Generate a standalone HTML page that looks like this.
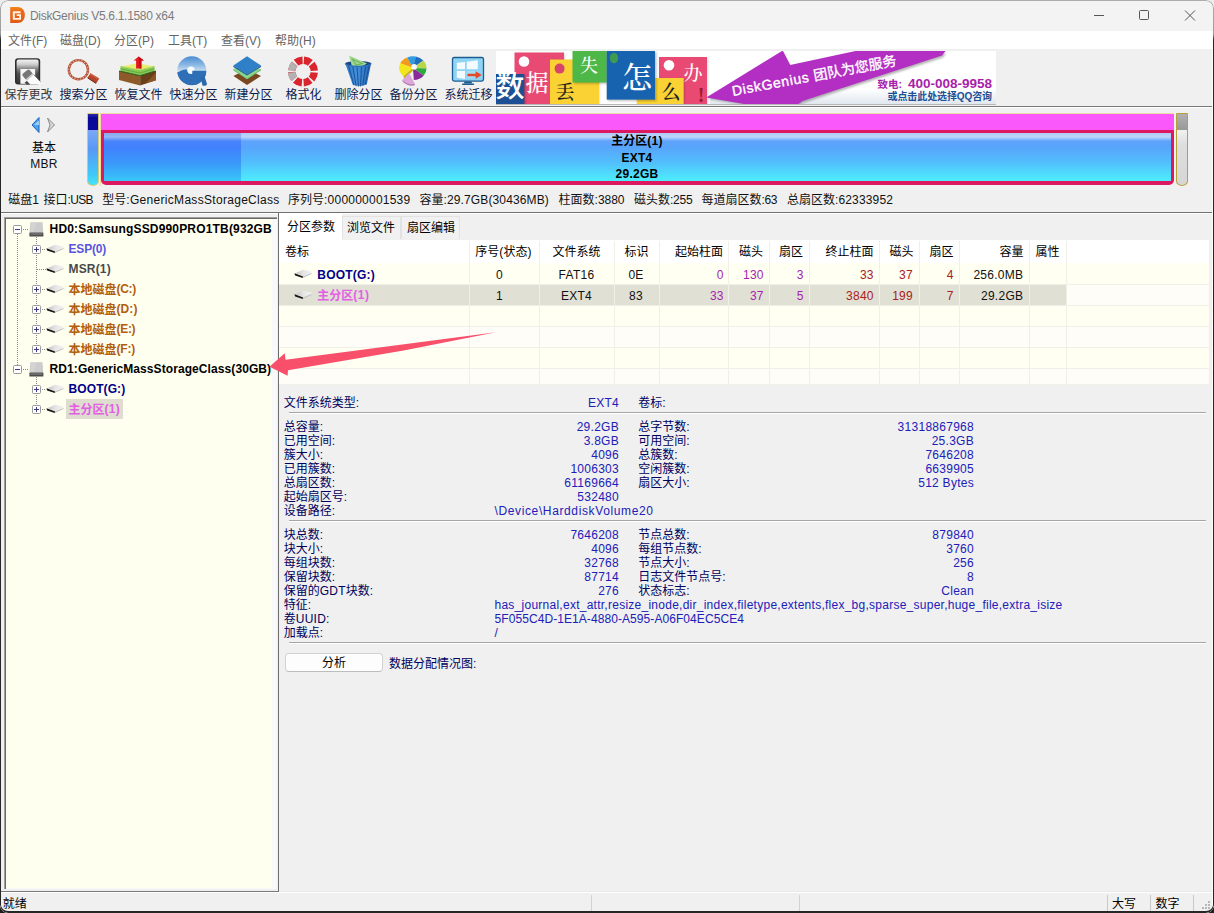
<!DOCTYPE html>
<html lang="zh-CN">
<head>
<meta charset="utf-8">
<title>DiskGenius V5.6.1.1580 x64</title>
<style>
*{box-sizing:border-box;margin:0;padding:0}
html,body{width:1214px;height:913px;overflow:hidden;background:#1c1c1c}
body{background:linear-gradient(#ececec 0,#ececec 30px,#1c1c1c 44px)}
body{font-family:"Liberation Sans","Noto Sans CJK SC",sans-serif;font-size:12px;color:#000;position:relative}
#win{position:absolute;left:0;top:0;width:1214px;height:913px;background:#f0f0f0;border-radius:8px;overflow:hidden}
.abs{position:absolute}
.t{position:absolute;white-space:nowrap;line-height:14px;height:14px}
.b{font-weight:bold}
#title{position:absolute;left:0;top:0;width:1214px;height:31px;background:#f3f3f3}
#title .cap{left:30px;top:9px;color:#7c7c7c;font-size:12px;letter-spacing:-.31px}
#menu{position:absolute;left:0;top:31px;width:1214px;height:18px;background:#fff}
#menu .t{top:3px;color:#646464}
#tb{position:absolute;left:0;top:50px;width:1214px;height:56px;background:#f0f0f0}
#tb .lab{width:75px;text-align:center;top:38px}
/* disk map */
#cylL,#cylR{position:absolute;top:113px;width:12px;height:73px;border-radius:1px 1px 6px 6px/1px 1px 5px 5px;overflow:hidden}
#cylL{left:87px;border:1px solid #d8c870;background:linear-gradient(#7aa8f4 17px,#5a98f6 35px,#40c8f8 60px,#46e6fa 72px)}
#cylL .top{position:absolute;left:0;top:0;width:10px;height:16px;background:linear-gradient(#2a2ab0,#0a0a96 4px,#0c0c9c)}
#cylR{left:1176px;border:1px solid #b8a038;background:linear-gradient(#f0f0f0 17px,#dedede 30px,#d6d6d6)}
#cylR .top{position:absolute;left:0;top:0;width:10px;height:16px;background:linear-gradient(#b0b0b0,#989898)}
#pbar{position:absolute;left:100px;top:113px;width:1074px;height:73px;border-top:1px solid #ecdca0;border-left:1px solid #ecdca0}
#pbar .mag{position:absolute;left:0;top:0;width:1073px;height:17px;background:#fa58fa}
#pbar .part{position:absolute;left:0;top:16px;width:1073px;height:55px;border:3.500px solid #dc1860;border-radius:0 0 5px 5px;overflow:hidden;background:#dc1860}
#pbar .used{position:absolute;left:0;top:0;width:137px;height:48px;background:linear-gradient(#88a8ec 0,#94b6f4 4px,#4a84fa 8px,#4080fc 14px,#3a98fa 30px,#38bcf8 44px,#3cc8f8 48px)}
#pbar .free{position:absolute;left:137px;top:0;right:0;height:48px;background:linear-gradient(#b0caf6 0,#bcd6fa 4px,#60a4fc 8px,#58a4fc 14px,#52c0fc 30px,#4ee4fc 44px,#4eecfc 48px)}
.info{color:#111}
/* tree */
#tree{position:absolute;left:4px;top:217px;width:273px;height:672px;border:1px solid #a0a0a0;border-right:none;border-bottom:none;background:#f9f9f9;box-shadow:inset 1px 1px 0 #696969}
#treein{position:absolute;left:-5px;top:-218px;width:278px;height:1107px;clip-path:inset(219px 6px 219px 6px);background:#fffff0}
#tree .t{font-size:12px}
.dv{position:absolute;width:1px;background:repeating-linear-gradient(#8a8a8a 0 1px,transparent 1px 2px)}
.dh{position:absolute;height:1px;background:repeating-linear-gradient(90deg,#8a8a8a 0 1px,transparent 1px 2px)}
/* right */
#rp .tab{position:absolute;background:#f1f1f1;border:1px solid #e2e2e2;border-bottom:none}
#rp .tab.act{background:#fff;border-color:#fff}
.lb{color:#00005c;margin-top:-.6px}
.vl{color:#2020b8;margin-top:-.9px}
.n{color:#111}
#frame{position:absolute;left:0;top:0;width:1214px;height:913px;border-radius:8px;border:1px solid transparent;border-bottom-width:2px;background:linear-gradient(#adadad 0,#9c9c9c 34px,#262626 40px) border-box;-webkit-mask:linear-gradient(#fff 0 0) padding-box,linear-gradient(#fff 0 0);-webkit-mask-composite:xor;mask-composite:exclude;pointer-events:none}
#bn{position:absolute;left:496px;top:1px;width:500px;height:54px;overflow:hidden}
#bn .bt{height:auto;line-height:1;text-align:center}
#bnt1{left:236.400px;top:31px;font-size:14px;color:#fff;height:18px;line-height:18px;transform-origin:0 50%;transform:rotate(-10.600deg)}
#bnt1{-webkit-text-stroke:.35px #fff}
#bnt1 span{letter-spacing:.69px}
#bnt2{left:196px;width:300px;text-align:right;top:25px;font-size:13.500px;font-weight:bold;color:#a81eaa;height:16px;line-height:16px}
#bnt3{left:196px;width:300px;text-align:right;top:40px;font-size:10px;font-weight:bold;color:#1c4f94;height:12px;line-height:12px;letter-spacing:-.1px}
#bnt2 i{font-style:normal;font-size:10.500px;position:relative;top:-.5px}
.l{letter-spacing:.27px}
#bn .bt{font-weight:bold}
#bn .sf{font-family:"Liberation Serif","Noto Serif CJK SC",serif;font-weight:500}
.cj span{position:relative;top:-.8px}
</style>
</head>
<body>
<div id="win">
<div id="title">
  <svg class="abs" style="left:9px;top:6px" width="17" height="18" viewBox="0 0 17 18">
    <defs><linearGradient id="glg" x1="0" y1="0" x2="0" y2="1"><stop offset="0" stop-color="#f08a18"/><stop offset=".25" stop-color="#ec6a1c"/><stop offset="1" stop-color="#e05a16"/></linearGradient></defs>
    <path d="M1.200 1h7.300c4.600 0 7.300 3.400 7.300 8s-2.700 8-7.300 8H1.200z" fill="url(#glg)"/>
    <path d="M3.800 5.300h7.800v1.900H5.800v4.800h4.400V9.900H7.700V8.300h4.300v5.500H3.800z" fill="#fff3e0"/>
  </svg>
  <div class="t cap">DiskGenius V5.6.1.1580 x64</div>
  <svg class="abs" style="left:1080px;top:0" width="134" height="31" viewBox="1080 0 134 31" fill="none" stroke="#555" stroke-width="1">
    <path d="M1094 15.500h10"/>
    <rect x="1139.500" y="10.500" width="9" height="9" rx="1"/>
    <path d="M1185 10.500l10 10M1195 10.500l-10 10"/>
  </svg>
</div>
<div id="menu">
  <div class="t" style="left:8px">文件(F)</div>
  <div class="t" style="left:60px">磁盘(D)</div>
  <div class="t" style="left:114px">分区(P)</div>
  <div class="t" style="left:168px">工具(T)</div>
  <div class="t" style="left:221px">查看(V)</div>
  <div class="t" style="left:275px">帮助(H)</div>
</div>
<div id="tb">
<svg class="abs" style="left:0;top:0" width="496" height="56" viewBox="0 50 496 56">
<defs>
<linearGradient id="gsv" x1="0" y1="0" x2="0" y2="1"><stop offset="0" stop-color="#f2f2f2"/><stop offset=".2" stop-color="#cfcfcf"/><stop offset=".42" stop-color="#7a7a7a"/><stop offset=".6" stop-color="#4e4e4e"/><stop offset="1" stop-color="#333"/></linearGradient>
<linearGradient id="gq" x1="0" y1="0" x2="0" y2="1"><stop offset="0" stop-color="#4a8cd2"/><stop offset=".3" stop-color="#8ab8e4"/><stop offset=".55" stop-color="#d4e4f4"/><stop offset=".56" stop-color="#3a78be"/><stop offset="1" stop-color="#2e6db4"/></linearGradient>
<linearGradient id="gbin" x1="0" y1="0" x2="1" y2="0"><stop offset="0" stop-color="#2f79c8"/><stop offset=".45" stop-color="#4490dc"/><stop offset="1" stop-color="#2466b4"/></linearGradient>
</defs>
<!-- 1 save -->
<rect x="15" y="58.200" width="25.200" height="26.400" rx="3" fill="#2e2e2e"/>
<rect x="16.600" y="59.600" width="22" height="23.600" rx="1.800" fill="url(#gsv)"/>
<rect x="20.400" y="69" width="14.800" height="14.800" fill="#f6f6f6"/>
<path d="M22.600 75.800Q22 74.600 23 73.600L27.600 69.800Q28.800 69.200 29.800 70.200L32.600 73.400 25.800 79.600z" fill="#777"/>
<path d="M25.800 79.600L32.600 73.400 33.800 74.600 27 81z" fill="#c9c9c9"/>
<path d="M27 81L33.800 74.600 40.200 81.400V84.600H30.200z" fill="#fbfbfb"/>
<path d="M33.800 74.600L40.200 81.400" stroke="#555" stroke-width=".8" fill="none"/>
<path d="M27 81L30.200 84.600H26.400L24.600 82.600z" fill="#4a4a4a"/>
<!-- 2 search -->
<circle cx="78.400" cy="69.700" r="9.600" fill="none" stroke="#b2533a" stroke-width="2.400"/>
<circle cx="78.400" cy="69.700" r="9.600" fill="none" stroke="#e6b49a" stroke-width="1.200" stroke-dasharray="1.200 1.800"/>
<path d="M90.500 73.200l8.800 5.200-3.200 5-8.600-5.600z" fill="#b8432c"/>
<path d="M90.500 73.200l8.800 5.200-.8 1.200-8.800-5.300z" fill="#d2674a"/>
<path d="M87.500 77.800l8.600 5.600" stroke="#6e2414" stroke-width="1"/>
<!-- 3 recover -->
<path d="M119 71L140.200 75.700V85.400L119 80z" fill="#8e5a2a"/>
<path d="M140.200 75.700L156 71V80.200L140.200 85.400z" fill="#6a3e18"/>
<path d="M145.500 83.600L156 72.500V80.200z" fill="#8a5626"/>
<path d="M119 71L140.200 75.700 156 71" fill="none" stroke="#3a2208" stroke-width=".8"/>
<path d="M120.500 66.500V71.200L140 75.600 154.500 71.200V66.500L140 70z" fill="#86c956"/>
<path d="M120.500 68.800L140 73 154.500 68.800" fill="none" stroke="#5fa838" stroke-width=".9"/>
<path d="M120.500 71.200L140 75.600 154.500 71.200" fill="none" stroke="#2f6a1c" stroke-width="1"/>
<path d="M120.500 66.400L137.700 63.200 154.500 66.400 140 70z" fill="#e9ee72"/>
<path d="M120.500 66.400L140 70 154.500 66.400" fill="none" stroke="#a8d458" stroke-width=".9"/>
<path d="M138.700 56.600l5.200 4h-2.500v8h-5.300v-8h-2.500z" fill="#e3181e"/>
<path d="M138.700 56.600l5.200 4h-2.500v8h-2z" fill="#c01018"/>
<!-- 4 quick -->
<circle cx="191.800" cy="70.700" r="14.500" fill="url(#gq)"/>
<path d="M177.500 73c2.500-2 6-3.800 9.500-3.300 2 .3 3 2.700 5.500 2.700V70.700h13.800a14.500 14.500 0 0 1-28.800 2.300z" fill="#2f6fb6"/>
<path d="M200.500 77.500l3.600-2.500 3 9.200-1.500 1.500h-3z" fill="#2c68ac"/>
<circle cx="191" cy="70.200" r="3.700" fill="#f6fafd"/>
<path d="M192.300 70.700h3v3.400c-1 .5-2 .6-3 .3z" fill="#2f6fb6"/>
<!-- 5 new (layers) -->
<path d="M233.400 76l13.600-7 14 7-14 9z" fill="#7a4820"/>
<path d="M233.400 69l13.600-6 14 6.500-14 9.700z" fill="#8ed48c"/>
<path d="M233.400 70.500l13.600 8.700 14-8.700v-1.500l-14 9.500-13.600-9.500z" fill="#6cbc70"/>
<path d="M233.400 65.600l13.600-9.400 14 9.400-14 8.700z" fill="#2f80c8"/>
<path d="M233.400 65.600l13.600 8.700 14-8.700v1.300l-14 8.700-13.600-8.700z" fill="#1f5f9e"/>
<!-- 6 format -->
<g fill="none" stroke-width="7.400">
<circle cx="303" cy="71.500" r="11.300" stroke="#d9252d" stroke-dasharray="7.075 1.800" stroke-dashoffset="-0.900" transform="rotate(-90 303 71.500)"/>
<circle cx="303" cy="71.500" r="11.300" stroke="#b2b2b2" stroke-dasharray="7.075 1.800 7.075 55.050" stroke-dashoffset="-0.900" transform="rotate(135 303 71.500)"/>
</g>
<!-- 7 delete -->
<ellipse cx="358.200" cy="63.600" rx="12.900" ry="2.700" fill="#1a4784"/>
<path d="M349 55.400L367.100 63.600 359 67.500 351.900 66z" fill="#a2d892"/>
<path d="M352.400 59.200L362.300 63.500 356.200 65z" fill="none" stroke="#6cb65e" stroke-width="1.100"/>
<path d="M345.300 63.600A12.900 2.700 0 0 0 371.100 63.600L366.800 84.500Q359.700 87.400 352.600 84.500z" fill="url(#gbin)"/>
<path d="M345.300 63.600A12.900 2.700 0 0 0 371.100 63.600" fill="none" stroke="#2a6cb8" stroke-width="1.200"/>
<path d="M348.600 66l5.400 19.400M352.800 66.800l3.400 19.400M357 67.200l1.400 19.400M361.400 67l-.8 19.400M365.600 66.400l-2.800 19.200M369.200 65.600l-4 18.600" stroke="#1c5296" stroke-width="1"/>
<!-- 8 backup pie -->
<g transform="translate(412.900 68) scale(.944 .928)">
<path d="M0 0L-13.500 -5A14.400 12.500 0 0 1 -6 -11.400z" fill="#f39a1c"/>
<path d="M0 0L-6 -11.400A14.400 12.500 0 0 1 3 -12.300z" fill="#2f9be0"/>
<path d="M0 0L3 -12.300A14.400 12.500 0 0 1 11 -8z" fill="#1f6fc0"/>
<path d="M0 0L11 -8A14.400 12.500 0 0 1 14.400 .5z" fill="#b7d64a"/>
<path d="M0 0L14.400 .5A14.400 12.500 0 0 1 11.500 8z" fill="#2eaa3c"/>
<path d="M0 0L11.500 8A14.400 12.500 0 0 1 1 13z" fill="#8a2a9a"/>
<path d="M0 0L-13.500 -5A14.400 12.500 0 0 0 -10 9z" fill="#f4e61c"/>
<path d="M-10 9l10-9v3l-9.500 8.500z" fill="#c4b410"/>
<path d="M-4 5.500l6 11.500c-4 1.500-10-.5-13-4z" fill="#dca6d8"/>
<path d="M-11 13c3 3.500 9 5.500 13 4v1.500c-4 1.500-10-.5-13-4z" fill="#b87ab4"/>
<circle cx="1.300" cy="-1.200" r="3" fill="#f6f6f6"/>
</g>
<!-- 9 migrate -->
<rect x="452.500" y="57.500" width="31" height="23.600" rx="1.800" fill="#8fd3f5" stroke="#1c5c90" stroke-width="1.300"/>
<path d="M456.800 62.800l8.200-.9v7.400h-8.200zM466.700 61.700l11.100-1.500v9.100h-11.100zM456.800 71h8.200v7.900l-8.200-1.100z" fill="#f2fbff"/>
<path d="M466.700 71h11.100v6.500l-11.100 1z" fill="#a8ddf7"/>
<path d="M467.400 73.800h8.200v-2.500l6.200 3.700-6.200 3.700v-2.500h-8.200z" fill="#e2492a"/>
<path d="M464.600 81.600h6.800l.8 2h-8.400z" fill="#1c5c90"/>
<rect x="462" y="83.400" width="12.200" height="1.500" rx=".7" fill="#1c5c90"/>
</svg>
<div class="t lab" style="left:-9px;color:#3a3a3a">保存更改</div>
<div class="t lab" style="left:46px;color:#0c1a4a">搜索分区</div>
<div class="t lab" style="left:101px;color:#0c1a4a">恢复文件</div>
<div class="t lab" style="left:156px;color:#0c1a4a">快速分区</div>
<div class="t lab" style="left:211px;color:#0c1a4a">新建分区</div>
<div class="t lab" style="left:266px;color:#0c1a4a">格式化</div>
<div class="t lab" style="left:321px;color:#0c1a4a">删除分区</div>
<div class="t lab" style="left:376px;color:#0c1a4a">备份分区</div>
<div class="t lab" style="left:431px;color:#0c1a4a">系统迁移</div>
<div id="bn">
<svg class="abs" style="left:0;top:0" width="500" height="54" viewBox="496 51 500 54">
<defs>
<linearGradient id="bnbg" x1="0" y1="0" x2="0" y2="1"><stop offset="0" stop-color="#fff"/><stop offset=".7" stop-color="#fff"/><stop offset="1" stop-color="#dfe6ee"/></linearGradient>
<filter id="bsh" x="-10%" y="-10%" width="120%" height="130%"><feGaussianBlur stdDeviation="1.200"/></filter>
</defs>
<rect x="496" y="51" width="500" height="54" fill="#fff"/>
<rect x="710" y="51" width="286" height="54" fill="url(#bnbg)"/>
<!-- tags -->
<rect x="516" y="53.500" width="49" height="52" fill="#000" opacity=".18" filter="url(#bsh)"/>
<rect x="514.500" y="52.500" width="49.500" height="53" fill="#e84a74"/>
<circle cx="524" cy="61.500" r="5.300" fill="#fff"/>
<rect x="551.500" y="60.500" width="48" height="45" fill="#000" opacity=".18" filter="url(#bsh)"/>
<rect x="550" y="59.500" width="49" height="46" fill="#fbd233"/>
<circle cx="559.600" cy="68.600" r="5" fill="#d8456a"/>
<rect x="497" y="75" width="28.500" height="30" fill="#000" opacity=".25" filter="url(#bsh)"/>
<rect x="496" y="74" width="28.300" height="31" fill="#1c4f94"/>
<rect x="574" y="52" width="34" height="32" fill="#000" opacity=".22" filter="url(#bsh)"/>
<rect x="572.500" y="51" width="34.200" height="31.500" fill="#4db748"/>
<rect x="637.500" y="79" width="47" height="26" fill="#fbd233"/>
<rect x="660" y="58" width="48" height="47" fill="#000" opacity=".15" filter="url(#bsh)"/>
<rect x="659" y="57" width="48" height="48" fill="#e84a74"/>
<circle cx="669" cy="65.300" r="5.300" fill="#fff"/>
<rect x="638" y="79" width="46.500" height="26" fill="#000" opacity=".2" filter="url(#bsh)"/>
<rect x="636.700" y="78" width="47" height="27" fill="#fbd233"/>
<rect x="608" y="52" width="48.500" height="49" fill="#000" opacity=".25" filter="url(#bsh)"/>
<rect x="606.700" y="51" width="48.300" height="48.600" fill="#1763b0"/>
<ellipse cx="614" cy="58" rx="4.200" ry="5.200" fill="#3f9a50"/>
<!-- arrow -->
<path d="M708 99l75-46 8 14 65-14h90l-3 4.500L803 103l-5 3h-46z" fill="#000" opacity=".3" filter="url(#bsh)"/>
<path d="M706.300 97.500L782 51h1l7.200 14L855.500 51H945.500L942 55.500 802.500 101 797 105H750z" fill="#b32ec2"/>
<rect x="496" y="104" width="500" height="1" fill="#b8b8b8"/>
</svg>
<div class="t bt" style="left:-2px;top:22px;width:32px;font-size:29px;color:#fff;font-weight:500">数</div>
<div class="t bt sf" style="left:27px;top:21px;width:28px;font-size:23px;color:#fff">据</div>
<div class="t bt sf" style="left:57px;top:32px;width:24px;font-size:19px;color:#222">丢</div>
<div class="t bt sf" style="left:81px;top:6px;width:24px;font-size:18px;color:#fff">失</div>
<div class="t bt sf" style="left:125px;top:12px;width:32px;font-size:30px;color:#fff">怎</div>
<div class="t bt sf" style="left:163px;top:32px;width:24px;font-size:19px;color:#222">么</div>
<div class="t bt sf" style="left:185px;top:13px;width:24px;font-size:19px;color:#fff">办</div>
<div class="t bt" style="left:199px;top:34px;width:12px;font-size:20px;color:#a0182c;font-family:'Liberation Serif',serif">!</div>
<div class="t" id="bnt1"><span>DiskGenius </span>团队为您服务</div>
<div class="t" id="bnt2"><i>致电:&nbsp;&nbsp;</i>400-008-9958</div>
<div class="t" id="bnt3">或点击此处选择QQ咨询</div>
</div>
</div>
<div id="dm">
<div class="abs" style="left:1px;top:106px;width:1212px;height:1px;background:#787878"></div>
<div class="abs" style="left:1px;top:107px;width:1212px;height:1px;background:#fff"></div>
<svg class="abs" style="left:28px;top:116px" width="30" height="18" viewBox="28 116 30 18">
  <path d="M32 125l7-7.500v15z" fill="#4aa2f2" stroke="#1f5fb0" stroke-width="1" stroke-linejoin="round"/>
  <path d="M34 125l5-4.500v4.500z" fill="#9fd0fa"/>
  <path d="M47.500 118l7 7-7 7 2.500-7z" fill="#d6d6d6" stroke="#8a8a8a" stroke-width="1" stroke-linejoin="round"/>
</svg>
<div class="t" style="left:-106px;top:141px;width:300px;text-align:center;color:#000">基本</div>
<div class="t" style="left:-106px;top:156.5px;width:300px;text-align:center;color:#111"><span class="l">MBR</span></div>
<div id="cylL"><div class="top"></div></div>
<div id="pbar">
  <div class="mag"></div>
  <div class="part"><div class="used"></div><div class="free"></div></div>
</div>
<div id="cylR"><div class="top"></div></div>
<div class="t b" style="left:487px;top:134px;width:300px;text-align:center;">主分区<span class="l">(1)</span></div>
<div class="t b" style="left:487px;top:150.5px;width:300px;text-align:center;"><span class="l">EXT4</span></div>
<div class="t b" style="left:487px;top:167px;width:300px;text-align:center;"><span class="l">29.2GB</span></div>
<div class="t info" style="left:8.3px;top:193px;">磁盘<span style="letter-spacing:-0.988px">1</span></div>
<div class="t info" style="left:43.6px;top:193px;">接口<span style="letter-spacing:-0.704px">:USB</span></div>
<div class="t info" style="left:102.3px;top:193px;">型号<span style="letter-spacing:0.302px">:GenericMassStorageClass</span></div>
<div class="t info" style="left:288px;top:193px;">序列号<span style="letter-spacing:0.229px">:000000001539</span></div>
<div class="t info" style="left:419.4px;top:193px;">容量<span style="letter-spacing:0.138px">:29.7GB(30436MB)</span></div>
<div class="t info" style="left:558.6px;top:193px;">柱面数<span style="letter-spacing:-0.026px">:3880</span></div>
<div class="t info" style="left:634px;top:193px;">磁头数<span style="letter-spacing:-0.240px">:255</span></div>
<div class="t info" style="left:701.5px;top:193px;">每道扇区数<span style="letter-spacing:-0.429px">:63</span></div>
<div class="t info" style="left:787px;top:193px;">总扇区数<span style="letter-spacing:0.141px">:62333952</span></div>
<div class="abs" style="left:1px;top:212px;width:1211px;height:1px;background:#707070"></div>
<div class="abs" style="left:1px;top:213px;width:1212px;height:1px;background:#fff"></div>
</div>
<div id="tree"><div id="treein">
<div class="dv" style="left:17px;top:234px;height:131px"></div>
<div class="dv" style="left:36px;top:237px;height:113px"></div>
<div class="dv" style="left:36px;top:377px;height:33px"></div>
<svg class="abs" style="left:13px;top:225px" width="9" height="9" viewBox="0 0 9 9"><rect x=".5" y=".5" width="8" height="8" rx="1" fill="#fff" stroke="#9a9a9a"/><path d="M2 4.500h5" stroke="#3a3a8a" stroke-width="1"/></svg>
<div class="dh" style="left:23px;top:229px;width:6px"></div>
<svg class="abs" style="left:29px;top:222px" width="15" height="15" viewBox="0 0 15 15"><path d="M1.300 .3h12.200l.8 10.300H.5z" fill="#cdcdcd"/><path d="M2 .8h10.800l.5 9.300H1.500z" fill="#d4d4d4"/><path d="M7.500 .8h5.300l.5 9.300H5z" fill="#c6c6c6" opacity=".6"/><rect x=".4" y="10.400" width="14" height="4.200" rx=".6" fill="#4c4c4c"/><rect x="1.500" y="11.300" width="11.800" height="1.600" fill="#6e6e6e"/><rect x="2" y="10.400" width="11" height=".8" fill="#8c8c8c"/></svg>
<div class="t b" style="left:49.6px;top:221.7px;color:#000"><span style="letter-spacing:0.170px">HD0:SamsungSSD990PRO1TB(932GB)</span></div>
<svg class="abs" style="left:32px;top:245px" width="9" height="9" viewBox="0 0 9 9"><rect x=".5" y=".5" width="8" height="8" rx="1" fill="#fff" stroke="#9a9a9a"/><path d="M2 4.500h5" stroke="#3a3a8a" stroke-width="1"/><path d="M4.500 2v5" stroke="#3a3a8a" stroke-width="1"/></svg>
<div class="dh" style="left:42px;top:249px;width:4px"></div>
<svg class="abs" style="left:45.6px;top:244px" width="19" height="10" viewBox="0 0 19 10"><defs><linearGradient id="pgt249" x1="0" y1="0" x2="1" y2="0"><stop offset="0" stop-color="#c4c4c4"/><stop offset=".5" stop-color="#e6e6e6"/><stop offset="1" stop-color="#f2f2f2"/></linearGradient></defs><path d="M1.700 3.900L9.100 .7 17.500 2.400V3.900L9.100 7.400z" fill="url(#pgt249)"/><path d="M9.100 7.400L17.500 3.900V5.100L8.700 8.900z" fill="#c2c2c2"/><path d="M.7 4.300L9.100 7.400 8.700 9 1.200 6.500Q.3 5.400 .7 4.300z" fill="#161616"/></svg>
<div class="t b" style="left:68.5px;top:241.7px;color:#5a55e0"><span style="letter-spacing:-0.181px">ESP(0)</span></div>
<div class="dh" style="left:37px;top:269px;width:9px"></div>
<svg class="abs" style="left:45.6px;top:264px" width="19" height="10" viewBox="0 0 19 10"><defs><linearGradient id="pgt269" x1="0" y1="0" x2="1" y2="0"><stop offset="0" stop-color="#c4c4c4"/><stop offset=".5" stop-color="#e6e6e6"/><stop offset="1" stop-color="#f2f2f2"/></linearGradient></defs><path d="M1.700 3.900L9.100 .7 17.500 2.400V3.900L9.100 7.400z" fill="url(#pgt269)"/><path d="M9.100 7.400L17.500 3.900V5.100L8.700 8.900z" fill="#c2c2c2"/><path d="M.7 4.300L9.100 7.400 8.700 9 1.200 6.500Q.3 5.400 .7 4.300z" fill="#161616"/></svg>
<div class="t b" style="left:68.5px;top:261.7px;color:#4a4a4a"><span style="letter-spacing:0.176px">MSR(1)</span></div>
<svg class="abs" style="left:32px;top:285px" width="9" height="9" viewBox="0 0 9 9"><rect x=".5" y=".5" width="8" height="8" rx="1" fill="#fff" stroke="#9a9a9a"/><path d="M2 4.500h5" stroke="#3a3a8a" stroke-width="1"/><path d="M4.500 2v5" stroke="#3a3a8a" stroke-width="1"/></svg>
<div class="dh" style="left:42px;top:289px;width:4px"></div>
<svg class="abs" style="left:45.6px;top:284px" width="19" height="10" viewBox="0 0 19 10"><defs><linearGradient id="pgt289" x1="0" y1="0" x2="1" y2="0"><stop offset="0" stop-color="#c4c4c4"/><stop offset=".5" stop-color="#e6e6e6"/><stop offset="1" stop-color="#f2f2f2"/></linearGradient></defs><path d="M1.700 3.900L9.100 .7 17.500 2.400V3.900L9.100 7.400z" fill="url(#pgt289)"/><path d="M9.100 7.400L17.500 3.900V5.100L8.700 8.900z" fill="#c2c2c2"/><path d="M.7 4.300L9.100 7.400 8.700 9 1.200 6.500Q.3 5.400 .7 4.300z" fill="#161616"/></svg>
<div class="t b cj" style="left:68.5px;top:282.6px;color:#b25e0c">本地磁盘<span style="letter-spacing:-0.289px">(C:)</span></div>
<svg class="abs" style="left:32px;top:305px" width="9" height="9" viewBox="0 0 9 9"><rect x=".5" y=".5" width="8" height="8" rx="1" fill="#fff" stroke="#9a9a9a"/><path d="M2 4.500h5" stroke="#3a3a8a" stroke-width="1"/><path d="M4.500 2v5" stroke="#3a3a8a" stroke-width="1"/></svg>
<div class="dh" style="left:42px;top:309px;width:4px"></div>
<svg class="abs" style="left:45.6px;top:304px" width="19" height="10" viewBox="0 0 19 10"><defs><linearGradient id="pgt309" x1="0" y1="0" x2="1" y2="0"><stop offset="0" stop-color="#c4c4c4"/><stop offset=".5" stop-color="#e6e6e6"/><stop offset="1" stop-color="#f2f2f2"/></linearGradient></defs><path d="M1.700 3.900L9.100 .7 17.500 2.400V3.900L9.100 7.400z" fill="url(#pgt309)"/><path d="M9.100 7.400L17.500 3.900V5.100L8.700 8.900z" fill="#c2c2c2"/><path d="M.7 4.300L9.100 7.400 8.700 9 1.200 6.500Q.3 5.400 .7 4.300z" fill="#161616"/></svg>
<div class="t b cj" style="left:68.5px;top:302.6px;color:#b25e0c">本地磁盘<span style="letter-spacing:0.086px">(D:)</span></div>
<svg class="abs" style="left:32px;top:325px" width="9" height="9" viewBox="0 0 9 9"><rect x=".5" y=".5" width="8" height="8" rx="1" fill="#fff" stroke="#9a9a9a"/><path d="M2 4.500h5" stroke="#3a3a8a" stroke-width="1"/><path d="M4.500 2v5" stroke="#3a3a8a" stroke-width="1"/></svg>
<div class="dh" style="left:42px;top:329px;width:4px"></div>
<svg class="abs" style="left:45.6px;top:324px" width="19" height="10" viewBox="0 0 19 10"><defs><linearGradient id="pgt329" x1="0" y1="0" x2="1" y2="0"><stop offset="0" stop-color="#c4c4c4"/><stop offset=".5" stop-color="#e6e6e6"/><stop offset="1" stop-color="#f2f2f2"/></linearGradient></defs><path d="M1.700 3.900L9.100 .7 17.500 2.400V3.900L9.100 7.400z" fill="url(#pgt329)"/><path d="M9.100 7.400L17.500 3.900V5.100L8.700 8.900z" fill="#c2c2c2"/><path d="M.7 4.300L9.100 7.400 8.700 9 1.200 6.500Q.3 5.400 .7 4.300z" fill="#161616"/></svg>
<div class="t b cj" style="left:68.5px;top:322.6px;color:#b25e0c">本地磁盘<span style="letter-spacing:-0.300px">(E:)</span></div>
<svg class="abs" style="left:32px;top:345px" width="9" height="9" viewBox="0 0 9 9"><rect x=".5" y=".5" width="8" height="8" rx="1" fill="#fff" stroke="#9a9a9a"/><path d="M2 4.500h5" stroke="#3a3a8a" stroke-width="1"/><path d="M4.500 2v5" stroke="#3a3a8a" stroke-width="1"/></svg>
<div class="dh" style="left:42px;top:349px;width:4px"></div>
<svg class="abs" style="left:45.6px;top:344px" width="19" height="10" viewBox="0 0 19 10"><defs><linearGradient id="pgt349" x1="0" y1="0" x2="1" y2="0"><stop offset="0" stop-color="#c4c4c4"/><stop offset=".5" stop-color="#e6e6e6"/><stop offset="1" stop-color="#f2f2f2"/></linearGradient></defs><path d="M1.700 3.900L9.100 .7 17.500 2.400V3.900L9.100 7.400z" fill="url(#pgt349)"/><path d="M9.100 7.400L17.500 3.900V5.100L8.700 8.900z" fill="#c2c2c2"/><path d="M.7 4.300L9.100 7.400 8.700 9 1.200 6.500Q.3 5.400 .7 4.300z" fill="#161616"/></svg>
<div class="t b cj" style="left:68.5px;top:342.6px;color:#b25e0c">本地磁盘<span style="letter-spacing:-0.207px">(F:)</span></div>
<svg class="abs" style="left:13px;top:365px" width="9" height="9" viewBox="0 0 9 9"><rect x=".5" y=".5" width="8" height="8" rx="1" fill="#fff" stroke="#9a9a9a"/><path d="M2 4.500h5" stroke="#3a3a8a" stroke-width="1"/></svg>
<div class="dh" style="left:23px;top:369px;width:6px"></div>
<svg class="abs" style="left:29px;top:362px" width="15" height="15" viewBox="0 0 15 15"><path d="M1.300 .3h12.200l.8 10.300H.5z" fill="#cdcdcd"/><path d="M2 .8h10.800l.5 9.300H1.500z" fill="#d4d4d4"/><path d="M7.500 .8h5.300l.5 9.300H5z" fill="#c6c6c6" opacity=".6"/><rect x=".4" y="10.400" width="14" height="4.200" rx=".6" fill="#4c4c4c"/><rect x="1.500" y="11.300" width="11.800" height="1.600" fill="#6e6e6e"/><rect x="2" y="10.400" width="11" height=".8" fill="#8c8c8c"/></svg>
<div class="t b" style="left:49.6px;top:361.7px;color:#000"><span style="letter-spacing:0.086px">RD1:GenericMassStorageClass(30GB)</span></div>
<svg class="abs" style="left:32px;top:385px" width="9" height="9" viewBox="0 0 9 9"><rect x=".5" y=".5" width="8" height="8" rx="1" fill="#fff" stroke="#9a9a9a"/><path d="M2 4.500h5" stroke="#3a3a8a" stroke-width="1"/><path d="M4.500 2v5" stroke="#3a3a8a" stroke-width="1"/></svg>
<div class="dh" style="left:42px;top:389px;width:4px"></div>
<svg class="abs" style="left:45.6px;top:384px" width="19" height="10" viewBox="0 0 19 10"><defs><linearGradient id="pgt389" x1="0" y1="0" x2="1" y2="0"><stop offset="0" stop-color="#c4c4c4"/><stop offset=".5" stop-color="#e6e6e6"/><stop offset="1" stop-color="#f2f2f2"/></linearGradient></defs><path d="M1.700 3.900L9.100 .7 17.500 2.400V3.900L9.100 7.400z" fill="url(#pgt389)"/><path d="M9.100 7.400L17.500 3.900V5.100L8.700 8.900z" fill="#c2c2c2"/><path d="M.7 4.300L9.100 7.400 8.700 9 1.200 6.500Q.3 5.400 .7 4.300z" fill="#161616"/></svg>
<div class="t b" style="left:68.5px;top:381.7px;color:#00008b"><span style="letter-spacing:0.100px">BOOT(G:)</span></div>
<svg class="abs" style="left:32px;top:405px" width="9" height="9" viewBox="0 0 9 9"><rect x=".5" y=".5" width="8" height="8" rx="1" fill="#fff" stroke="#9a9a9a"/><path d="M2 4.500h5" stroke="#3a3a8a" stroke-width="1"/><path d="M4.500 2v5" stroke="#3a3a8a" stroke-width="1"/></svg>
<div class="dh" style="left:42px;top:409px;width:4px"></div>
<svg class="abs" style="left:45.6px;top:404px" width="19" height="10" viewBox="0 0 19 10"><defs><linearGradient id="pgt409" x1="0" y1="0" x2="1" y2="0"><stop offset="0" stop-color="#c4c4c4"/><stop offset=".5" stop-color="#e6e6e6"/><stop offset="1" stop-color="#f2f2f2"/></linearGradient></defs><path d="M1.700 3.900L9.100 .7 17.500 2.400V3.900L9.100 7.400z" fill="url(#pgt409)"/><path d="M9.100 7.400L17.500 3.900V5.100L8.700 8.900z" fill="#c2c2c2"/><path d="M.7 4.300L9.100 7.400 8.700 9 1.200 6.500Q.3 5.400 .7 4.300z" fill="#161616"/></svg>
<div class="abs" style="left:66px;top:399px;width:57px;height:20px;background:#deddd0"></div>
<div class="t b cj" style="left:68.5px;top:402.6px;color:#e45ee4">主分区<span style="letter-spacing:0.309px">(1)</span></div>
</div></div>
<div id="rp">
<div class="abs" style="left:279px;top:214px;width:930px;height:26px;background:#f0f0f0"></div>
<div class="tab act" style="left:279px;top:214px;width:63px;height:26px"></div>
<div class="tab" style="left:342px;top:216px;width:59px;height:23px"></div>
<div class="tab" style="left:401px;top:216px;width:59px;height:23px"></div>
<div class="t" style="left:287px;top:219.5px;">分区参数</div>
<div class="t" style="left:347px;top:221px;">浏览文件</div>
<div class="t" style="left:407px;top:221px;">扇区编辑</div>
<div class="abs" style="left:278px;top:213px;width:1px;height:678px;background:#6e6e6e"></div>
<div class="abs" style="left:279px;top:240px;width:930px;height:145px;background:#fffffa"></div>
<div class="abs" style="left:279px;top:240px;width:930px;height:23px;background:#fff"></div>
<div class="abs" style="left:279px;top:263px;width:930px;height:22px;background:#fffff2;border-bottom:1px solid #f0f0e8"></div>
<div class="abs" style="left:279px;top:285px;width:930px;height:21px;background:#fffdf8;border-bottom:1px solid #f0f0e8"></div>
<div class="abs" style="left:279px;top:306px;width:930px;height:21px;background:#fffff2;border-bottom:1px solid #f0f0e8"></div>
<div class="abs" style="left:279px;top:327px;width:930px;height:21px;background:#fffdf8;border-bottom:1px solid #f0f0e8"></div>
<div class="abs" style="left:279px;top:348px;width:930px;height:21px;background:#fffff2;border-bottom:1px solid #f0f0e8"></div>
<div class="abs" style="left:279px;top:369px;width:930px;height:16px;background:#fffdf8;border-bottom:1px solid #f0f0e8"></div>
<div class="abs" style="left:279px;top:285px;width:787px;height:20px;background:#e1e0d4"></div>
<div class="abs" style="left:469px;top:241px;width:1px;height:144px;background:#f0f0e9"></div>
<div class="abs" style="left:539px;top:241px;width:1px;height:144px;background:#f0f0e9"></div>
<div class="abs" style="left:614px;top:241px;width:1px;height:144px;background:#f0f0e9"></div>
<div class="abs" style="left:659px;top:241px;width:1px;height:144px;background:#f0f0e9"></div>
<div class="abs" style="left:728px;top:241px;width:1px;height:144px;background:#f0f0e9"></div>
<div class="abs" style="left:769px;top:241px;width:1px;height:144px;background:#f0f0e9"></div>
<div class="abs" style="left:809px;top:241px;width:1px;height:144px;background:#f0f0e9"></div>
<div class="abs" style="left:879px;top:241px;width:1px;height:144px;background:#f0f0e9"></div>
<div class="abs" style="left:919px;top:241px;width:1px;height:144px;background:#f0f0e9"></div>
<div class="abs" style="left:959px;top:241px;width:1px;height:144px;background:#f0f0e9"></div>
<div class="abs" style="left:1029px;top:241px;width:1px;height:144px;background:#f0f0e9"></div>
<div class="abs" style="left:1066px;top:241px;width:1px;height:144px;background:#f0f0e9"></div>
<div class="t" style="left:285px;top:244.5px;">卷标</div>
<div class="t" style="left:353.5px;top:244.5px;width:300px;text-align:center;">序号<span class="l">(</span>状态<span class="l">)</span></div>
<div class="t" style="left:426.5px;top:244.5px;width:300px;text-align:center;">文件系统</div>
<div class="t" style="left:486.5px;top:244.5px;width:300px;text-align:center;">标识</div>
<div class="t" style="left:423px;top:244.5px;width:300px;text-align:right;">起始柱面</div>
<div class="t" style="left:463px;top:244.5px;width:300px;text-align:right;">磁头</div>
<div class="t" style="left:503px;top:244.5px;width:300px;text-align:right;">扇区</div>
<div class="t" style="left:573.5px;top:244.5px;width:300px;text-align:right;">终止柱面</div>
<div class="t" style="left:613.5px;top:244.5px;width:300px;text-align:right;">磁头</div>
<div class="t" style="left:653.5px;top:244.5px;width:300px;text-align:right;">扇区</div>
<div class="t" style="left:723.5px;top:244.5px;width:300px;text-align:right;">容量</div>
<div class="t" style="left:1035.5px;top:244.5px;">属性</div>
<svg class="abs" style="left:294px;top:269px" width="19" height="10" viewBox="0 0 19 10"><defs><linearGradient id="pgr274" x1="0" y1="0" x2="1" y2="0"><stop offset="0" stop-color="#c4c4c4"/><stop offset=".5" stop-color="#e6e6e6"/><stop offset="1" stop-color="#f2f2f2"/></linearGradient></defs><path d="M1.700 3.900L9.100 .7 17.500 2.400V3.900L9.100 7.400z" fill="url(#pgr274)"/><path d="M9.100 7.400L17.500 3.900V5.100L8.700 8.900z" fill="#c2c2c2"/><path d="M.7 4.300L9.100 7.400 8.700 9 1.200 6.500Q.3 5.400 .7 4.300z" fill="#161616"/></svg>
<div class="t b" style="left:317.3px;top:267.5px;color:#00008b"><span style="letter-spacing:0.213px">BOOT(G:)</span></div>
<div class="t n" style="left:349.5px;top:267.5px;width:300px;text-align:center;"><span class="l">0</span></div>
<div class="t n" style="left:426.5px;top:267.5px;width:300px;text-align:center;"><span class="l">FAT16</span></div>
<div class="t n" style="left:486px;top:267.5px;width:300px;text-align:center;"><span class="l">0E</span></div>
<div class="t n" style="left:423.79999999999995px;top:267.5px;width:300px;text-align:right;color:#a61fb0"><span class="l">0</span></div>
<div class="t n" style="left:463.79999999999995px;top:267.5px;width:300px;text-align:right;color:#a61fb0"><span class="l">130</span></div>
<div class="t n" style="left:503.79999999999995px;top:267.5px;width:300px;text-align:right;color:#a61fb0"><span class="l">3</span></div>
<div class="t n" style="left:573.8px;top:267.5px;width:300px;text-align:right;color:#a8201c"><span class="l">33</span></div>
<div class="t n" style="left:613px;top:267.5px;width:300px;text-align:right;color:#a8201c"><span class="l">37</span></div>
<div class="t n" style="left:653.6px;top:267.5px;width:300px;text-align:right;color:#a8201c"><span class="l">4</span></div>
<div class="t n" style="left:723.3px;top:267.5px;width:300px;text-align:right;"><span class="l">256.0MB</span></div>
<svg class="abs" style="left:294px;top:290px" width="19" height="10" viewBox="0 0 19 10"><defs><linearGradient id="pgr295" x1="0" y1="0" x2="1" y2="0"><stop offset="0" stop-color="#c4c4c4"/><stop offset=".5" stop-color="#e6e6e6"/><stop offset="1" stop-color="#f2f2f2"/></linearGradient></defs><path d="M1.700 3.900L9.100 .7 17.500 2.400V3.900L9.100 7.400z" fill="url(#pgr295)"/><path d="M9.100 7.400L17.500 3.900V5.100L8.700 8.900z" fill="#c2c2c2"/><path d="M.7 4.300L9.100 7.400 8.700 9 1.200 6.500Q.3 5.400 .7 4.300z" fill="#161616"/></svg>
<div class="t b cj" style="left:317.3px;top:289.2px;color:#e45ee4">主分区<span style="letter-spacing:0.509px">(1)</span></div>
<div class="t n" style="left:349.5px;top:288.5px;width:300px;text-align:center;"><span class="l">1</span></div>
<div class="t n" style="left:426.5px;top:288.5px;width:300px;text-align:center;"><span class="l">EXT4</span></div>
<div class="t n" style="left:486px;top:288.5px;width:300px;text-align:center;"><span class="l">83</span></div>
<div class="t n" style="left:423.79999999999995px;top:288.5px;width:300px;text-align:right;color:#a61fb0"><span class="l">33</span></div>
<div class="t n" style="left:463.79999999999995px;top:288.5px;width:300px;text-align:right;color:#a61fb0"><span class="l">37</span></div>
<div class="t n" style="left:503.79999999999995px;top:288.5px;width:300px;text-align:right;color:#a61fb0"><span class="l">5</span></div>
<div class="t n" style="left:573.8px;top:288.5px;width:300px;text-align:right;color:#a8201c"><span class="l">3840</span></div>
<div class="t n" style="left:613px;top:288.5px;width:300px;text-align:right;color:#a8201c"><span class="l">199</span></div>
<div class="t n" style="left:653.6px;top:288.5px;width:300px;text-align:right;color:#a8201c"><span class="l">7</span></div>
<div class="t n" style="left:723.3px;top:288.5px;width:300px;text-align:right;"><span class="l">29.2GB</span></div>
<div class="t lb" style="left:283.7px;top:396.5px;">文件系统类型<span class="l">:</span></div>
<div class="t vl" style="left:319px;top:396.5px;width:300px;text-align:right;"><span class="l">EXT4</span></div>
<div class="t lb" style="left:638.2px;top:396.5px;">卷标<span class="l">:</span></div>
<div class="abs" style="left:289px;top:412px;width:917px;height:1px;background:#a6a6a6"></div><div class="abs" style="left:289px;top:413px;width:917px;height:1px;background:#fff"></div>
<div class="t lb" style="left:283.7px;top:420.5px;">总容量<span class="l">:</span></div>
<div class="t vl" style="left:319px;top:420.5px;width:300px;text-align:right;"><span class="l">29.2GB</span></div>
<div class="t lb" style="left:638.2px;top:420.5px;">总字节数<span class="l">:</span></div>
<div class="t vl" style="left:674px;top:420.5px;width:300px;text-align:right;"><span class="l">31318867968</span></div>
<div class="t lb" style="left:283.7px;top:434.5px;">已用空间<span class="l">:</span></div>
<div class="t vl" style="left:319px;top:434.5px;width:300px;text-align:right;"><span class="l">3.8GB</span></div>
<div class="t lb" style="left:638.2px;top:434.5px;">可用空间<span class="l">:</span></div>
<div class="t vl" style="left:674px;top:434.5px;width:300px;text-align:right;"><span class="l">25.3GB</span></div>
<div class="t lb" style="left:283.7px;top:448.5px;">簇大小<span class="l">:</span></div>
<div class="t vl" style="left:319px;top:448.5px;width:300px;text-align:right;"><span class="l">4096</span></div>
<div class="t lb" style="left:638.2px;top:448.5px;">总簇数<span class="l">:</span></div>
<div class="t vl" style="left:674px;top:448.5px;width:300px;text-align:right;"><span class="l">7646208</span></div>
<div class="t lb" style="left:283.7px;top:462.5px;">已用簇数<span class="l">:</span></div>
<div class="t vl" style="left:319px;top:462.5px;width:300px;text-align:right;"><span class="l">1006303</span></div>
<div class="t lb" style="left:638.2px;top:462.5px;">空闲簇数<span class="l">:</span></div>
<div class="t vl" style="left:674px;top:462.5px;width:300px;text-align:right;"><span class="l">6639905</span></div>
<div class="t lb" style="left:283.7px;top:476.5px;">总扇区数<span class="l">:</span></div>
<div class="t vl" style="left:319px;top:476.5px;width:300px;text-align:right;"><span class="l">61169664</span></div>
<div class="t lb" style="left:638.2px;top:476.5px;">扇区大小<span class="l">:</span></div>
<div class="t vl" style="left:674px;top:476.5px;width:300px;text-align:right;"><span class="l">512 Bytes</span></div>
<div class="t lb" style="left:283.7px;top:490.5px;">起始扇区号<span class="l">:</span></div>
<div class="t vl" style="left:319px;top:490.5px;width:300px;text-align:right;"><span class="l">532480</span></div>
<div class="t lb" style="left:283.7px;top:504.5px;">设备路径<span class="l">:</span></div>
<div class="t vl" style="left:494.5px;top:504.5px;"><span style="letter-spacing:0.626px">\Device\HarddiskVolume20</span></div>
<div class="abs" style="left:289px;top:520px;width:917px;height:1px;background:#a6a6a6"></div><div class="abs" style="left:289px;top:521px;width:917px;height:1px;background:#fff"></div>
<div class="t lb" style="left:283.7px;top:528.5px;">块总数<span class="l">:</span></div>
<div class="t vl" style="left:319px;top:528.5px;width:300px;text-align:right;"><span class="l">7646208</span></div>
<div class="t lb" style="left:638.2px;top:528.5px;">节点总数<span class="l">:</span></div>
<div class="t vl" style="left:674px;top:528.5px;width:300px;text-align:right;"><span class="l">879840</span></div>
<div class="t lb" style="left:283.7px;top:542.5px;">块大小<span class="l">:</span></div>
<div class="t vl" style="left:319px;top:542.5px;width:300px;text-align:right;"><span class="l">4096</span></div>
<div class="t lb" style="left:638.2px;top:542.5px;">每组节点数<span class="l">:</span></div>
<div class="t vl" style="left:674px;top:542.5px;width:300px;text-align:right;"><span class="l">3760</span></div>
<div class="t lb" style="left:283.7px;top:556.5px;">每组块数<span class="l">:</span></div>
<div class="t vl" style="left:319px;top:556.5px;width:300px;text-align:right;"><span class="l">32768</span></div>
<div class="t lb" style="left:638.2px;top:556.5px;">节点大小<span class="l">:</span></div>
<div class="t vl" style="left:674px;top:556.5px;width:300px;text-align:right;"><span class="l">256</span></div>
<div class="t lb" style="left:283.7px;top:570.5px;">保留块数<span class="l">:</span></div>
<div class="t vl" style="left:319px;top:570.5px;width:300px;text-align:right;"><span class="l">87714</span></div>
<div class="t lb" style="left:638.2px;top:570.5px;">日志文件节点号<span class="l">:</span></div>
<div class="t vl" style="left:674px;top:570.5px;width:300px;text-align:right;"><span class="l">8</span></div>
<div class="t lb" style="left:283.7px;top:584.5px;">保留的<span class="l">GDT</span>块数<span class="l">:</span></div>
<div class="t vl" style="left:319px;top:584.5px;width:300px;text-align:right;"><span class="l">276</span></div>
<div class="t lb" style="left:638.2px;top:584.5px;">状态标志<span class="l">:</span></div>
<div class="t vl" style="left:674px;top:584.5px;width:300px;text-align:right;"><span class="l">Clean</span></div>
<div class="t lb" style="left:283.7px;top:598.5px;">特征<span class="l">:</span></div>
<div class="t vl" style="left:494.5px;top:598.5px;"><span style="letter-spacing:0.256px">has_journal,ext_attr,resize_inode,dir_index,filetype,extents,flex_bg,sparse_super,huge_file,extra_isize</span></div>
<div class="t lb" style="left:283.7px;top:612.5px;">卷<span class="l">UUID:</span></div>
<div class="t vl" style="left:494.5px;top:612.5px;"><span style="letter-spacing:0.075px">5F055C4D-1E1A-4880-A595-A06F04EC5CE4</span></div>
<div class="t lb" style="left:283.7px;top:626.5px;">加载点<span class="l">:</span></div>
<div class="t vl" style="left:494.5px;top:626.5px;"><span class="l">/</span></div>
<div class="abs" style="left:289px;top:642px;width:917px;height:1px;background:#a6a6a6"></div><div class="abs" style="left:289px;top:643px;width:917px;height:1px;background:#fff"></div>
<div class="abs" style="left:285px;top:653px;width:98px;height:19px;background:#fdfdfd;border:1px solid #d2d2d2;border-bottom-color:#bdbdbd;border-radius:4px"></div>
<div class="t" style="left:184px;top:656.2px;width:300px;text-align:center;">分析</div>
<div class="t lb" style="left:389px;top:657.5px;">数据分配情况图<span class="l">:</span></div>
<svg class="abs" style="left:260px;top:325px" width="250" height="60" viewBox="260 325 250 60"><path d="M496 332.200L285.600 359.800 284.700 353.300 269.500 366.700 287.600 375.800 288 370.300 405 350.200z" fill="#f8506a"/></svg>
</div>
<div id="sb">
<div class="abs" style="left:1px;top:891px;width:278px;height:1px;background:#7a7a7a"></div>
<div class="abs" style="left:279px;top:891px;width:933px;height:1px;background:#e9e9e9"></div>
<div class="abs" style="left:1px;top:892px;width:1212px;height:1px;background:#fff"></div>
<div class="abs" style="left:591px;top:895px;width:1px;height:16px;background:#d2d2d2"></div>
<div class="abs" style="left:799px;top:895px;width:1px;height:16px;background:#d2d2d2"></div>
<div class="abs" style="left:1107px;top:895px;width:1px;height:16px;background:#c8c8c8"></div>
<div class="abs" style="left:1150px;top:895px;width:1px;height:16px;background:#c8c8c8"></div>
<div class="abs" style="left:1193px;top:895px;width:1px;height:16px;background:#c8c8c8"></div>
<svg class="abs" style="left:1200px;top:899px" width="12" height="12" viewBox="0 0 12 12" fill="#b8b8b8"><rect x="8" y="2" width="2" height="2"/><rect x="5" y="5" width="2" height="2"/><rect x="8" y="5" width="2" height="2"/><rect x="2" y="8" width="2" height="2"/><rect x="5" y="8" width="2" height="2"/><rect x="8" y="8" width="2" height="2"/></svg>
<div class="t" style="left:2.8px;top:896.5px;">就绪</div>
<div class="t" style="left:1112px;top:896.5px;">大写</div>
<div class="t" style="left:1155.5px;top:896.5px;">数字</div>
</div>
<div class="abs" style="left:1212px;top:31px;width:1px;height:874px;background:#fbfbfb"></div>
<div id="frame"></div>
</div>
</body>
</html>
